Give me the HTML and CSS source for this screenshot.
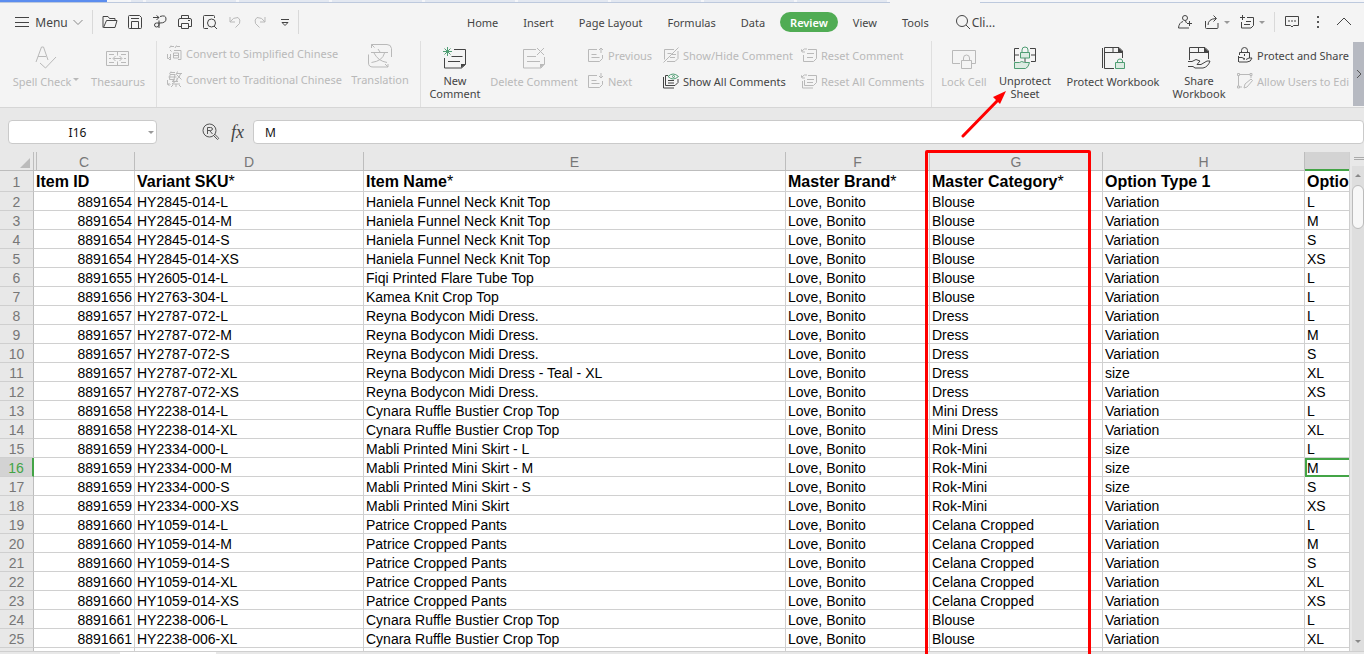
FILE: index.html
```html
<!DOCTYPE html>
<html lang="en">
<head>
<meta charset="utf-8">
<title>Spreadsheet</title>
<link rel="stylesheet" href="styles.css">
</head>
<body>
<div class="app">
  <div class="doc-tabs"><span class="doc home"></span><span class="doc short"></span><span class="doc first"></span><span class="doc"></span><span class="doc"></span><span class="doc"></span><span class="doc"></span><span class="doc"></span><span class="doc"></span><span class="doc"></span><span class="doc"></span><span class="doc active"></span><span class="rest"></span></div>

  <header class="topbar">
    <button class="menu-btn">
      <svg class="line" width="16" height="16" viewBox="0 0 16 16"><path d="M1 3.500h14M1 8.500h14M1 12.500h14"/></svg>
      <span>Menu</span>
      <svg class="line mid" width="10" height="8" viewBox="0 0 10 8"><path d="M.5 2L5 6.500L9.500 2"/></svg>
    </button>
    <div class="quick">
      <button aria-label="Open"><svg class="line" width="16" height="16" viewBox="0 0 16 16"><path d="M1 13.500V2.500h5l1.500 2h5.500v2M1.500 13.500L4.500 6.500h10.500l-2 7z"/></svg></button>
      <button aria-label="Save"><svg class="line" width="16" height="16" viewBox="0 0 16 16"><path d="M2.500 1.500h10l2 2v10q0 1-1 1h-11q-1 0-1-1v-11q0-1 1-1zM4.500 14V7.500h7V14M4 4.500h8"/></svg></button>
      <button aria-label="Export as PDF"><svg class="line" width="16" height="16" viewBox="0 0 16 16"><path d="M1 3.500h6M4.500 1.500l2.500 2-2.500 2.500M8 2.500q6-2 6 2.500 0 4-6 4H4.500q-2 0-2 2t2 2 2.500-2V6.500M7 9v5"/></svg></button>
      <button aria-label="Print"><svg class="line" width="16" height="16" viewBox="0 0 16 16"><path d="M4.500 5V1.500h7V5M4 12.500H1.500V6q0-1.500 1.500-1.500h10q1.500 0 1.500 1.500v6.500H12M4.500 9.500h7v5h-7zM11 6.500h2"/></svg></button>
      <button aria-label="Print preview"><svg class="line" width="16" height="16" viewBox="0 0 16 16"><path d="M6 14.500H2.500q-1 0-1-1v-11q0-1 1-1h9q1 0 1 1V4M12 12l3 3"/><circle cx="9.500" cy="9" r="4"/></svg></button>
      <button aria-label="Undo" disabled><svg class="line" width="16" height="16" viewBox="0 0 16 16"><path d="M3 3v5h5M3 8q3-5 8-4.500 3 2 1.500 6l-4 4"/></svg></button>
      <button aria-label="Redo" disabled><svg class="line" width="16" height="16" viewBox="0 0 16 16"><path d="M13 3v5H8M13 8q-3-5-8-4.500-3 2-1.500 6l4 4"/></svg></button>
      <button aria-label="Customize toolbar"><svg class="line" width="16" height="16" viewBox="0 0 16 16"><path d="M4 5.500h8M5 8.500l3 3 3-3z"/></svg></button>
    </div>
    <nav class="tabs">
      <button>Home</button><button>Insert</button><button>Page Layout</button><button>Formulas</button><button>Data</button><button class="current">Review</button><button>View</button><button>Tools</button>
    </nav>
    <button class="find">
      <svg class="line" width="16" height="16" viewBox="0 0 16 16"><circle cx="7" cy="7" r="5.500"/><path d="M11 11l4 4"/></svg>
      <span>Cli...</span>
    </button>
    <div class="corner">
      <button class="account" aria-label="Invite"><svg class="line" width="16" height="16" viewBox="0 0 16 16"><circle cx="8" cy="4" r="2.500"/><path d="M6 7.500q-4 1-4.500 6.500H12M10 8.500l-2-1M12.500 7v5M10 9.500h5"/></svg></button>
      <button class="with-caret" aria-label="Share"><svg class="line" width="16" height="16" viewBox="0 0 16 16"><path d="M1.500 7v6.500q0 1 1 1h10.500q1 0 1-1V9M4 11q0-6 8-6.500M9.500 1.500l3 3-3 3"/></svg><i class="caret"></i></button>
      <button class="with-caret" aria-label="Add note"><svg class="line" width="16" height="16" viewBox="0 0 16 16"><path d="M3.500 1v5M1 3.500h5M8 3.500h6.500v8l-2.500 2.500H2.500V8M7 7.500h5M5 10.500h6"/></svg><i class="caret"></i></button>
      <span class="bar"></span>
      <button class="notes" aria-label="Comments"><svg class="line" width="16" height="16" viewBox="0 0 16 16"><path d="M1.500 2.500h13v9H9.500L8 13l-1.500-1.500h-5zM4 7h2M7 7h2M10 7h2"/></svg></button>
      <button class="more" aria-label="More"><svg class="dots" width="4" height="14" viewBox="0 0 4 14"><path d="M1 1h2v2H1zM1 6h2v2H1zM1 11h2v2H1z"/></svg></button>
      <button aria-label="Collapse ribbon"><svg class="line" width="16" height="16" viewBox="0 0 16 16"><path d="M1 11l7-7 7 7"/></svg></button>
    </div>
  </header>

  <div class="ribbon">
    <div class="group proof">
      <button class="tool spell" disabled><svg class="line" width="24" height="24" viewBox="0 0 24 24"><path d="M2 16L7.500 1h2L14 14M4 10.500h8M6 17l5.500 5L22 11"/></svg><span>Spell Check<i class="caret"></i></span></button>
      <button class="tool thesaurus" disabled><svg class="line" width="24" height="24" viewBox="0 0 24 24"><path d="M.5 5.500h22v14H.5zM11.500 5.500v4M11.500 15.500v4M7.500 12.500h8M9.500 10l-2.500 2.500L9.500 15M13.500 10l2.500 2.500-2.500 2.500M3 8.500h5M3 12.500h2M3 16.500h5M15 8.500h5M18 12.500h2M15 16.500h5"/></svg><span>Thesaurus</span></button>
    </div>
    <div class="group chinese">
      <div class="stack convert">
        <button disabled><svg class="line" width="16" height="16" viewBox="0 0 16 16"><path d="M5 .5L3.500 3M5 1.500h3M10.500.5L9 3M10.500 1.500H14M4 5l1.500 1.500M4.500 9v6M8 5.500h7v9h-3M7.500 8h5v5h-5zM7.500 10.500h5M1.500 9v4.500H3M3 12l1.500 1.500L3 15"/></svg>Convert to Simplified Chinese</button>
        <button disabled><svg class="line" width="16" height="16" viewBox="0 0 16 16"><path d="M5 .5L3.500 3M5 1.500h4M4 3.500h5l-1 5H3.500zM2.500 6h8M11.500.5L10 4M11 2.500h5M14.500 3q-1 4-4.500 5.500M11 4l4.500 4.500M9 8.500L6 10.500h6M12 8.500l-6 4.500h8M10 13v3M7 14l-2 2M13 14l2 2M1.500 9v4.500H3M2.500 12L4 13.500 2.500 15"/></svg>Convert to Traditional Chinese</button>
      </div>
      <button class="tool raised translation" disabled><svg class="line" width="24" height="24" viewBox="0 0 24 24"><path d="M3.500 4V.5H19q4 0 4.500 4V13M3.500.5l3 3M.5 10.500V19q0 4 4.500 4H20v-3M20 23l-3-3M3 8.500h17M10 5l2 3M6 9q4 8 13 9.500M16.500 9q-2 8-13 9.500"/></svg><span>Translation</span></button>
    </div>
    <div class="group comments">
      <button class="tool two-line new-comment"><svg class="line" width="24" height="24" viewBox="0 0 24 24"><path d="M11 3.500h11.500v15l-4 3.500H1.500V12M8.500 10.500h11M5 15.500h12" /><path class="solid" d="M18 22v-4h5z"/><path class="green" d="M4.500 1v9M0 5.500h9M1.500 2.500l6 6M7.500 2.500l-6 6"/></svg><span>New<br>Comment</span></button>
      <button class="tool delete-comment" disabled><svg class="line" width="24" height="24" viewBox="0 0 24 24"><path d="M14 3.500H1.500V22H19l3.500-4V11M5 10.500h9M5 15.500h13M15 2l7 7M22 2l-7 7"/><path class="solid" d="M18 22v-4h5z"/></svg><span>Delete Comment</span></button>
      <div class="stack low nav">
        <button disabled><svg class="line" width="16" height="16" viewBox="0 0 16 16"><path d="M9 2.500H.5v12h11l3-3V8M3.500 7.500h5M3.500 10.500h8M13 6V1M11 3l2-2 2 2"/></svg>Previous</button>
        <button disabled><svg class="line" width="16" height="16" viewBox="0 0 16 16"><path d="M9 2.500H.5v12h11l3-3V8M3.500 7.500h5M3.500 10.500h8M13 0v5M11 3l2 2 2-2"/></svg>Next</button>
      </div>
      <div class="stack low show">
        <button disabled><svg class="line" width="16" height="16" viewBox="0 0 16 16"><path d="M11 2.500H1.500v10M4 14.500h8l3-3V4M15.500.5L.5 15.500M4.500 6.500h4M9 7.500h4M7 10.500h5"/></svg>Show/Hide Comment</button>
        <button><svg class="line" width="16" height="16" viewBox="0 0 16 16"><path d="M5 2.500H2.500v10H12l3-3V6M.5 4v11H11M5 7.500h6M5 10h6"/><path class="green" d="M5 3.500q5-5 10.500 0-5.500 5-10.500 0z"/><circle class="green" cx="10.500" cy="3.500" r="1"/></svg>Show All Comments</button>
      </div>
      <div class="stack low reset">
        <button disabled><svg class="line" width="16" height="16" viewBox="0 0 16 16"><path d="M7 2.500h8.500v9l-3 3H2.500V8M1 4q2-3 5-2M0 2l1 3h3M6 6.500h7M6 10.500h6"/></svg>Reset Comment</button>
        <button disabled><svg class="line" width="16" height="16" viewBox="0 0 16 16"><path d="M7 2.500h8.500v7l-3 3H3.500V7M1 4q2-3 5-2M0 2l1 3h3M6 6.500h7M6 9.500h6M1.500 8v7H12"/></svg>Reset All Comments</button>
      </div>
    </div>
    <div class="group protect">
      <button class="tool lock" disabled><svg class="line" width="24" height="24" viewBox="0 0 24 24"><path d="M8 17.500H.5v-13h23v13H20M9.500 14.500h10v8h-10zM11.500 14v-2q0-3 3-3t3 3v2"/></svg><span>Lock Cell</span></button>
      <button class="tool two-line unprotect"><svg class="line" width="24" height="24" viewBox="0 0 24 24"><path d="M6 2.500H1.500v13M17 2.500h5.500v13H18M1.500 9H6M18 9h4.500M12 12v4"/><path class="green tint" d="M7.500 6.500h9v5.500h-9zM1.500 16.500h5q2-2 5 0h5q-1 5-4 6H1.500z"/><path class="green" d="M9 6V4q0-3 3-3t3 3v2"/></svg><span>Unprotect<br>Sheet</span></button>
      <button class="tool workbook"><svg class="line" width="24" height="24" viewBox="0 0 24 24"><path d="M13 22.500H3.500v-21H18l3.500 3.500v7M1.500 2v20M4 6.500h17M12 2v4"/><path class="solid" d="M17 1v5h5z"/><path class="green tint" d="M14.500 16.500h9v6h-9z"/><path class="green" d="M16.500 16v-1q0-2 2.500-2t2.500 2v1"/></svg><span>Protect Workbook</span></button>
      <button class="tool two-line share"><svg class="line" width="24" height="24" viewBox="0 0 24 24"><path d="M2.500 14V1.500H18l3.500 3.500v8M3 6.500h18M11.500 2v4M1 15.500h4l4-2 4 1.500-3 3.500h4l6-3.500h3q-2 6-7 7H8l-2-1.500H1"/><path class="solid" d="M17 1v5h5z"/></svg><span>Share<br>Workbook</span></button>
      <div class="stack low secure">
        <button><svg class="line" width="16" height="16" viewBox="0 0 16 16"><path d="M2.500 8V5.500h10V11M4.500 5V3.500q0-3 3-3t3 3V5M1.500 9v6M2 10.500h3l3 1.500H6M9 12.500l3-1.500h3q-1 4-5 4H2M7.500 7v2"/></svg>Protect and Share</button>
        <button disabled><svg class="line" width="16" height="16" viewBox="0 0 16 16"><path d="M.5.500h2v2h-2zM13 .5h2v2h-2zM.5 13h2v2h-2zM3 1.500h10M1.500 3v10M14 3v2M3 14h2M7 15l1-4 6-5 1.500 1.500L10 14z"/></svg>Allow Users to Edi</button>
      </div>
    </div>
    <button class="scroll-right" aria-label="Scroll ribbon"><svg class="line" width="6" height="10" viewBox="0 0 6 10"><path d="M1 1l4 4-4 4"/></svg></button>
  </div>

  <div class="formula-bar">
    <div class="name-box"><input aria-label="Name box" value="I16"><button aria-label="Named cells"><i class="caret"></i></button></div>
    <button class="lookup" aria-label="Find"><svg class="line" width="18" height="18" viewBox="0 0 18 18"><circle cx="7.500" cy="7.500" r="6.500"/><path d="M5.500 11V4.500h3q2 0 2 1.500t-2 1.500h-3M8 8l2.500 3M11 12l4.500 4.500q2-1 .5-2L12.500 11"/></svg></button>
    <button class="fx">fx</button>
    <input class="formula" aria-label="Formula" value="M">
  </div>

  <main class="sheet">
    <div class="grid">
      <table>
        <colgroup><col class="w-n"><col class="w-c"><col class="w-d"><col class="w-e"><col class="w-f"><col class="w-g"><col class="w-h"><col></colgroup>
        <thead><tr><th class="select-all"><i></i></th><th class="after-hidden">C</th><th>D</th><th>E</th><th>F</th><th>G</th><th>H</th><th class="chosen"></th></tr></thead>
        <tbody>
          <tr class="titles"><th>1</th><td>Item ID</td><td>Variant SKU<span>*</span></td><td>Item Name<span>*</span></td><td>Master Brand<span>*</span></td><td>Master Category<span>*</span></td><td>Option Type 1</td><td>Optio</td></tr>
          <tr><th>2</th><td>8891654</td><td>HY2845-014-L</td><td>Haniela Funnel Neck Knit Top</td><td>Love, Bonito</td><td>Blouse</td><td>Variation</td><td>L</td></tr>
          <tr><th>3</th><td>8891654</td><td>HY2845-014-M</td><td>Haniela Funnel Neck Knit Top</td><td>Love, Bonito</td><td>Blouse</td><td>Variation</td><td>M</td></tr>
          <tr><th>4</th><td>8891654</td><td>HY2845-014-S</td><td>Haniela Funnel Neck Knit Top</td><td>Love, Bonito</td><td>Blouse</td><td>Variation</td><td>S</td></tr>
          <tr><th>5</th><td>8891654</td><td>HY2845-014-XS</td><td>Haniela Funnel Neck Knit Top</td><td>Love, Bonito</td><td>Blouse</td><td>Variation</td><td>XS</td></tr>
          <tr><th>6</th><td>8891655</td><td>HY2605-014-L</td><td>Fiqi Printed Flare Tube Top</td><td>Love, Bonito</td><td>Blouse</td><td>Variation</td><td>L</td></tr>
          <tr><th>7</th><td>8891656</td><td>HY2763-304-L</td><td>Kamea Knit Crop Top</td><td>Love, Bonito</td><td>Blouse</td><td>Variation</td><td>L</td></tr>
          <tr><th>8</th><td>8891657</td><td>HY2787-072-L</td><td>Reyna Bodycon Midi Dress.</td><td>Love, Bonito</td><td>Dress</td><td>Variation</td><td>L</td></tr>
          <tr><th>9</th><td>8891657</td><td>HY2787-072-M</td><td>Reyna Bodycon Midi Dress.</td><td>Love, Bonito</td><td>Dress</td><td>Variation</td><td>M</td></tr>
          <tr><th>10</th><td>8891657</td><td>HY2787-072-S</td><td>Reyna Bodycon Midi Dress.</td><td>Love, Bonito</td><td>Dress</td><td>Variation</td><td>S</td></tr>
          <tr><th>11</th><td>8891657</td><td>HY2787-072-XL</td><td>Reyna Bodycon Midi Dress - Teal - XL</td><td>Love, Bonito</td><td>Dress</td><td>size</td><td>XL</td></tr>
          <tr><th>12</th><td>8891657</td><td>HY2787-072-XS</td><td>Reyna Bodycon Midi Dress.</td><td>Love, Bonito</td><td>Dress</td><td>Variation</td><td>XS</td></tr>
          <tr><th>13</th><td>8891658</td><td>HY2238-014-L</td><td>Cynara Ruffle Bustier Crop Top</td><td>Love, Bonito</td><td>Mini Dress</td><td>Variation</td><td>L</td></tr>
          <tr><th>14</th><td>8891658</td><td>HY2238-014-XL</td><td>Cynara Ruffle Bustier Crop Top</td><td>Love, Bonito</td><td>Mini Dress</td><td>Variation</td><td>XL</td></tr>
          <tr><th>15</th><td>8891659</td><td>HY2334-000-L</td><td>Mabli Printed Mini Skirt - L</td><td>Love, Bonito</td><td>Rok-Mini</td><td>size</td><td>L</td></tr>
          <tr class="chosen-row"><th>16</th><td>8891659</td><td>HY2334-000-M</td><td>Mabli Printed Mini Skirt - M</td><td>Love, Bonito</td><td>Rok-Mini</td><td>size</td><td class="cursor">M</td></tr>
          <tr><th>17</th><td>8891659</td><td>HY2334-000-S</td><td>Mabli Printed Mini Skirt - S</td><td>Love, Bonito</td><td>Rok-Mini</td><td>size</td><td>S</td></tr>
          <tr><th>18</th><td>8891659</td><td>HY2334-000-XS</td><td>Mabli Printed Mini Skirt</td><td>Love, Bonito</td><td>Rok-Mini</td><td>Variation</td><td>XS</td></tr>
          <tr><th>19</th><td>8891660</td><td>HY1059-014-L</td><td>Patrice Cropped Pants</td><td>Love, Bonito</td><td>Celana Cropped</td><td>Variation</td><td>L</td></tr>
          <tr><th>20</th><td>8891660</td><td>HY1059-014-M</td><td>Patrice Cropped Pants</td><td>Love, Bonito</td><td>Celana Cropped</td><td>Variation</td><td>M</td></tr>
          <tr><th>21</th><td>8891660</td><td>HY1059-014-S</td><td>Patrice Cropped Pants</td><td>Love, Bonito</td><td>Celana Cropped</td><td>Variation</td><td>S</td></tr>
          <tr><th>22</th><td>8891660</td><td>HY1059-014-XL</td><td>Patrice Cropped Pants</td><td>Love, Bonito</td><td>Celana Cropped</td><td>Variation</td><td>XL</td></tr>
          <tr><th>23</th><td>8891660</td><td>HY1059-014-XS</td><td>Patrice Cropped Pants</td><td>Love, Bonito</td><td>Celana Cropped</td><td>Variation</td><td>XS</td></tr>
          <tr><th>24</th><td>8891661</td><td>HY2238-006-L</td><td>Cynara Ruffle Bustier Crop Top</td><td>Love, Bonito</td><td>Blouse</td><td>Variation</td><td>L</td></tr>
          <tr><th>25</th><td>8891661</td><td>HY2238-006-XL</td><td>Cynara Ruffle Bustier Crop Top</td><td>Love, Bonito</td><td>Blouse</td><td>Variation</td><td>XL</td></tr>
          <tr><th></th><td></td><td></td><td></td><td></td><td></td><td></td><td></td></tr>
        </tbody>
      </table>
    </div>
    <div class="scrollbar"><span class="split"></span><span class="track"><i class="caret up"></i><span class="thumb"></span><i class="caret down"></i></span></div>
  </main>
  <div class="sheet-tabs"><span></span></div>
  <div class="highlight"></div>
  <svg class="arrow" width="48" height="52" viewBox="0 0 48 52"><path d="M2 46L38 9" /><path class="tip" d="M45 1L32 7L39 14z"/></svg>
</div>
</body>
</html>
```
FILE: styles.css
```css
* { box-sizing: border-box; }
body { margin: 0; background: #e8e8e8; font: 11px/13px "Noto Sans", "Open Sans", sans-serif; color: #444; }
button, input { font: inherit; color: inherit; }
button { display: flex; align-items: center; justify-content: center; margin: 0; padding: 0; border: 0; background: none; white-space: nowrap; }
button:disabled { color: #b9b9b9; }
svg { flex: none; display: block; }
.line { fill: none; stroke: currentColor; stroke-width: 1; }
.line .green { stroke: #4f9d73; }
.line .tint { fill: #dcebe2; }
.line .solid { fill: currentColor; stroke: none; }
.caret { display: inline-block; flex: none; border: 3px solid transparent; border-top-color: #999; border-bottom: 0; }
.app { position: relative; display: flex; flex-direction: column; height: 100vh; overflow: hidden; }

.doc-tabs { display: flex; height: 3px; flex: none; border-bottom: 1px solid #bdc9dd; background: #f5f6f9; gap: 3px; }
.doc { flex: none; width: 90px; background: #e3e8f1; }
.doc.home { width: 107px; background: #5b8def; }
.doc.short { width: 18px; background: #f4f5f7; }
.doc.first { width: 12px; }
.doc.active { height: 3px; background: #f4f4f4; }
.rest { flex: 1; }

.topbar { display: flex; align-items: center; flex: none; height: 38px; background: #f4f4f4; }
.menu-btn { width: 93px; height: 24px; padding-left: 5px; gap: 5px; border-right: 1px solid #d9d9d9; font-size: 12px; }
.mid { color: #888; }
.quick { display: flex; gap: 9px; width: 206px; height: 24px; padding-left: 9px; border-right: 1px solid #d9d9d9; }
.tabs { display: flex; gap: 5px; margin-left: 158px; }
.tabs button { height: 20px; padding: 0 10px; border-radius: 10px; }
.tabs .current { background: #50ac54; color: #fff; font-weight: 600; }
.find { gap: 1px; margin-left: 16px; font-size: 12px; }
.corner { display: flex; align-items: center; margin-left: auto; padding-right: 12px; }
.account { margin-right: 11px; }
.with-caret { gap: 4px; margin-right: 9px; }
.bar { height: 20px; border-left: 1px solid #d9d9d9; }
.notes { margin: 0 16px 0 9px; }
.dots { fill: #555; }
.more { margin-right: 16px; }

.ribbon { display: flex; flex: none; height: 67px; border-bottom: 1px solid #d6d6d6; background: #f4f4f4; }
.group { display: flex; flex: none; border-right: 1px solid #dfdfdf; }
.proof { padding: 0 6px; }
.chinese { padding: 0 6px 0 9px; }
.comments { padding: 0 6px; }
.protect { flex: 1; min-width: 0; border: 0; overflow: hidden; }
.tool { flex: none; flex-direction: column; justify-content: flex-start; gap: 5px; padding-top: 5px; }
.tool.raised { padding-top: 3px; }
.tool.two-line { gap: 4px; }
.tool .caret { margin: 0 0 5px 2px; border-width: 3px 3px 0; }
.tool:disabled .caret { border-top-color: #b9b9b9; }
.spell { width: 80px; }
.thesaurus { width: 64px; }
.translation { width: 68px; }
.new-comment { width: 56px; }
.delete-comment { width: 102px; }
.lock { width: 64px; }
.unprotect { width: 58px; }
.workbook { width: 118px; }
.share { width: 54px; }
.stack { display: flex; flex-direction: column; flex: none; gap: 10px; padding-top: 4px; }
.stack.low { padding-top: 6px; }
.stack button { justify-content: flex-start; gap: 4px; height: 16px; }
.convert { width: 180px; }
.nav { width: 75px; margin-left: 3px; }
.show { width: 138px; }
.reset { width: 124px; }
.secure { margin-left: 11px; }
.scroll-right { flex: none; width: 11px; height: 64px; margin-top: 1px; background: #b6b9c1; color: #555; }

.formula-bar { display: flex; align-items: center; flex: none; height: 44px; padding: 4px 0 0 8px; background: #e8e8e8; color: #111; }
.name-box { display: flex; width: 149px; height: 24px; border: 1px solid #cacaca; border-radius: 4px; background: #fff; }
.name-box input { flex: 1; min-width: 0; border: 0; background: none; text-align: center; font-size: 12px; }
.name-box button { width: 10px; }
.lookup { margin-left: 45px; color: #555; }
.fx { margin: 0 9px 0 11px; color: #444; font: italic 18px/20px "Liberation Serif", serif; }
.formula { flex: 1; min-width: 0; height: 24px; padding: 0 11px; border: 1px solid #cacaca; border-radius: 4px; background: #fff; font-size: 12px; }

.sheet { display: flex; flex: 1; min-height: 0; }
.grid { flex: 1; min-width: 0; overflow: hidden; background: #fff; border-right: 1px solid #cfcfcf; }
table { width: 100%; table-layout: fixed; border-collapse: separate; border-spacing: 0; font: 14px/16px "Liberation Sans", Arial, sans-serif; color: #000; }
.w-n { width: 34px; }
.w-c { width: 101px; }
.w-d { width: 229px; }
.w-e { width: 422px; }
.w-f { width: 144px; }
.w-g { width: 173px; }
.w-h { width: 202px; }
th, td { height: 19px; padding: 2px 2px 0; overflow: hidden; white-space: nowrap; text-align: left; border: solid #d0d0d0; border-width: 0 1px 1px 0; }
th { background: #e8e8e8; color: #777; font-weight: normal; text-align: center; border-color: #bdbdbd; }
tbody th { border-bottom-color: #cfcfcf; }
td:nth-child(2) { text-align: right; }
td:last-child, th:last-child { border-right: 0; }
.select-all i { display: block; margin: 2px 2px 0 18px; border: solid transparent; border-width: 0 0 10px 10px; border-bottom-color: #bbb; }
.after-hidden { background: linear-gradient(90deg, #e8e8e8 2px, #bdbdbd 2px, #bdbdbd 3px, #e8e8e8 3px); }
thead .chosen { background: #d3d3d3; border-bottom: 2px solid #43a446; }
.titles td { font-size: 16px; font-weight: bold; line-height: 18px; }
.titles td:nth-child(2) { text-align: left; }
.titles th, .titles td { height: 21px; }
.titles span { font-weight: normal; }
.chosen-row th { background: #d3d3d3; color: #43a446; border-right: 2px solid #43a446; }
.chosen-row .cursor { border-bottom-color: #43a446; box-shadow: inset 2px 2px #43a446, inset 0 -1px #43a446; }
.scrollbar { display: flex; flex-direction: column; flex: none; width: 14px; background: #e8e8e8; }
.split { height: 9px; margin: 5px 0 0 4px; border-top: 1px solid #aaa; background: linear-gradient(#e8e8e8 1px, #aaa 1px, #aaa 2px, #e8e8e8 2px); }
.track { display: flex; flex-direction: column; align-items: center; flex: 1; margin-left: 2px; background: #dedede; }
.up { margin: 8px 0; border-width: 0 3px 3px; border-bottom: 3px solid #888; }
.thumb { width: 12px; height: 44px; border: 1px solid #bbb; border-radius: 6px; background: #f7f7f7; }
.down { margin: auto 0 8px; border-top-color: #888; }
.sheet-tabs { flex: none; height: 3px; padding-left: 120px; border-top: 1px solid #cfcfcf; background: #e8e8e8; }
.sheet-tabs span { display: block; width: 96px; height: 2px; background: #fff; }

.highlight { position: absolute; left: 925px; top: 150px; bottom: -6px; width: 166px; border: 3px solid #f00; border-radius: 2px; }
.arrow { position: absolute; left: 961px; top: 90px; fill: none; stroke: #f00; stroke-width: 3; stroke-linecap: round; }
.arrow .tip { fill: #f00; stroke: none; }
```
